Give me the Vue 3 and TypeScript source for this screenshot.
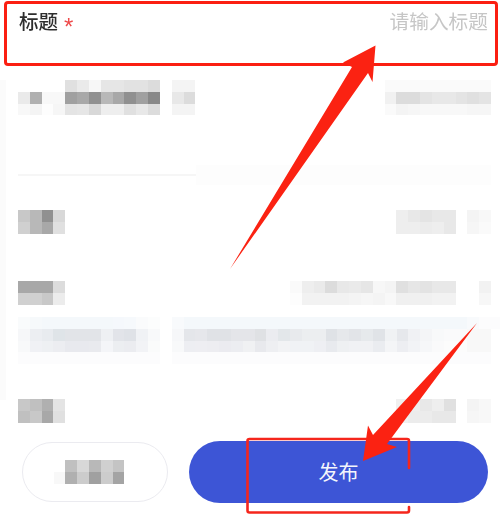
<script setup lang="ts">
type Row = { left: string[]; right: string[]; cls: string }

const rep = (n: number, c: string): string => Array(n).fill(c).join(' ')

const rows: Row[] = [
  {
    cls: 'r1',
    left: [
      '-- -- -- -- e0 ea f7 e6 e6 e2 e2 dc -- f4 f4',
      'ea b0 f8 f8 a0 a8 90 b8 a8 90 a0 88 -- e8 dc',
      'f8 f4 fd f6 e4 e6 d8 ee ee e0 e8 dc -- f4 f4',
    ],
    right: [
      'fa fa fa fa fa fa fa fa fa',
      'f1 dc dc e4 e8 e8 e4 e0 e4',
      'fa f4 f6 f8 f8 f8 f8 f6 f6',
    ],
  },
  {
    cls: 'r2',
    left: ['c8 b8 90 d8', 'd0 b8 a8 e0'],
    right: ['ee e8 e4 e8 e8 -- f4 f8', 'ee ee ec ee e8 -- f6 fa'],
  },
  {
    cls: 'r3',
    left: ['a8 a8 a8 dc', 'd0 d0 c8 ec'],
    right: [
      'fa ee ea dc e8 ea e6 f7 f4 e0 e6 e3 e8 e8 -- -- f2',
      'fd f2 f2 f2 f2 f4 f6 f4 f8 f0 f0 f0 f2 f2 -- -- f7',
    ],
  },
  {
    cls: 'r4',
    left: [
      `f9fbfc f6f9fb ${rep(6, 'f4f8fb')} f5f8fc f6f9fc fafbfc fcfdfd -- f8fafc ${rep(24, 'f4f8fb')} f8fafc fcfcfd fcfcfd`,
      'f6f7f9 eceef2 e8ebef dfe4e8 e2e4e8 e2e4e8 e2e4e8 eef0f3 e2e4e9 dfe2e7 f0f2f5 f8f9fa -- f6f7f9 e4e6ea e6e7eb e0e2e6 e0e2e6 e4e5e9 e4e5e9 dfe1e4 ebecf0 e3e7ea e8eaed eceef0 eceef0 dfe2e6 e6e8eb e2e4e8 e6e9ec e0e3e7 f0f2f4 e6e8ec f0f1f4 f4f5f7 f8f9fa fafafb fafafb f8f8f8 f8f8f8',
      'f8f9fa f0f1f5 eef0f3 ecedf1 e8e9ee e8e9ee e9eaee f4f5f8 eceef1 ebecf0 f2f3f6 fafbfb -- f8f9fa edeef2 eeeef2 ededf1 ebebf0 ecedf1 f0f1f3 e8e9ed eeeff2 f2f3f5 f0f2f5 f0f2f5 eeeff3 e8eaee eef0f2 f0f1f4 f0f1f4 eaecf0 f4f5f7 edeef2 f2f3f6 f6f7f9 fafafb fcfcfc fcfcfc f8f8f8 f8f8f8',
      `${rep(12, 'fcfcfd')} -- ${rep(27, 'fcfcfd')}`,
    ],
    right: [],
  },
  {
    cls: 'r5',
    left: ['c8 c0 b0 e4', 'c0 c8 a8 e0'],
    right: ['f0 ee e8 ee e0 -- f4 f8', 'f0 ec ec e8 e8 -- f6 f8'],
  },
]

const ghostMosaic: string[] = ['-- c0 d8 b8 d0 c4', 'f8 b0 cc a0 cc a4']

const cellColor = (token: string): string => {
  if (token === '--') return 'transparent'
  return token.length === 2 ? `#${token}${token}${token}` : `#${token}`
}
const cells = (line: string): string[] => line.split(' ').map(cellColor)
</script>

<template>
  <div class="form">
    <div class="title-row">
      <div class="label">标题<span class="star">*</span></div>
      <div class="placeholder">请输入标题</div>
    </div>

    <template v-for="(row, i) in rows" :key="row.cls">
      <div class="row" :class="row.cls">
        <div class="mosaic">
          <div v-for="(line, li) in row.left" :key="li" class="line">
            <i v-for="(c, ci) in cells(line)" :key="ci" class="cell" :style="{ background: c }"></i>
          </div>
        </div>
        <div v-if="row.right.length" class="mosaic">
          <div v-for="(line, li) in row.right" :key="li" class="line">
            <i v-for="(c, ci) in cells(line)" :key="ci" class="cell" :style="{ background: c }"></i>
          </div>
        </div>
      </div>
      <div v-if="i === 0" class="divider">
        <div class="divider-line"></div>
        <div class="divider-ghost"></div>
      </div>
    </template>

    <div class="actions">
      <button class="btn ghost" type="button">
        <span class="mosaic">
          <span v-for="(line, li) in ghostMosaic" :key="li" class="line">
            <i v-for="(c, ci) in cells(line)" :key="ci" class="cell" :style="{ background: c }"></i>
          </span>
        </span>
      </button>
      <button class="btn primary" type="button">发布</button>
    </div>

    <svg class="marks" width="500" height="516" viewBox="0 0 500 516" aria-hidden="true">
      <rect x="5.5" y="2.5" width="491" height="62" rx="2.5" fill="none" stroke="#fb1f12" stroke-width="3" />
      <path d="M409 468V441a2 2 0 0 0-2-2H249.5a2 2 0 0 0-2 2V510.5a2 2 0 0 0 2 2H407a2 2 0 0 0 2-2V507" fill="none" stroke="#f5261c" stroke-width="2.6" stroke-linecap="round" />
      <polygon points="375.5,45.5 343,62.5 352,67 230,269 368,73 372.5,82" fill="#fb2212" />
      <polygon points="477,323 373,435 368,425.5 363,461 397,447 387,444 404,421" fill="#fb2212" />
    </svg>
  </div>
</template>

<style scoped>
.form {
  position: relative;
  display: flex;
  flex-direction: column;
  width: 500px;
  height: 516px;
  overflow: hidden;
  background: linear-gradient(#fbfbfb, #fbfbfb) 0 80px / 6px 320px no-repeat #fff;
  font-family: "Noto Sans CJK SC", "Liberation Sans", sans-serif;
}
.title-row {
  display: flex;
  justify-content: space-between;
  align-items: center;
  height: 40px;
  padding: 0 12px 0 19px;
}
.label {
  font-size: 19.5px;
  font-weight: 500;
  color: #2e2e2e;
  filter: blur(0.3px);
}
.star {
  margin-left: 6px;
  color: #ee4a4a;
  font-family: "Liberation Sans", sans-serif;
  font-size: 24px;
  line-height: 0;
  vertical-align: -6px;
}
.placeholder {
  font-size: 19.7px;
  color: #c6c6c6;
  filter: blur(0.3px);
}
.row {
  display: flex;
  justify-content: space-between;
  padding: 0 9px 0 18px;
}
.r1 { margin-top: 40px; }
.r2 { margin-top: 25px; }
.r3 { margin-top: 47.3px; }
.r4 { margin-top: 12.3px; }
.r5 { margin-top: 34.7px; }
.mosaic {
  display: block;
  filter: blur(0.4px);
}
.line {
  display: flex;
  height: 11.83px;
}
.cell {
  display: block;
  flex: none;
  width: 11.83px;
  height: 100%;
}
.divider {
  display: flex;
  align-items: center;
  height: 20px;
  margin-top: 49.5px;
  padding: 0 9px 0 18px;
}
.divider-line {
  width: 178px;
  height: 2px;
  background: #f6f6f6;
}
.divider-ghost {
  flex: 1;
  height: 20px;
  background: #fdfdfd;
}
.actions {
  display: flex;
  align-items: center;
  gap: 21px;
  height: 62px;
  margin-top: 18.3px;
  padding-left: 22px;
}
.btn {
  display: flex;
  align-items: center;
  justify-content: center;
  padding: 0;
  border-radius: 31px;
  font-family: inherit;
}
.ghost {
  width: 146px;
  height: 60px;
  border: 1.5px solid #ebebf0;
  background: #fff;
  padding-right: 12px;
}
.primary {
  width: 299px;
  height: 62px;
  border: 0;
  background: #3d55d6;
  color: #f4f5fc;
  font-size: 20px;
  font-weight: 400;
}
.marks {
  position: absolute;
  left: 0;
  top: 0;
  pointer-events: none;
}
</style>
